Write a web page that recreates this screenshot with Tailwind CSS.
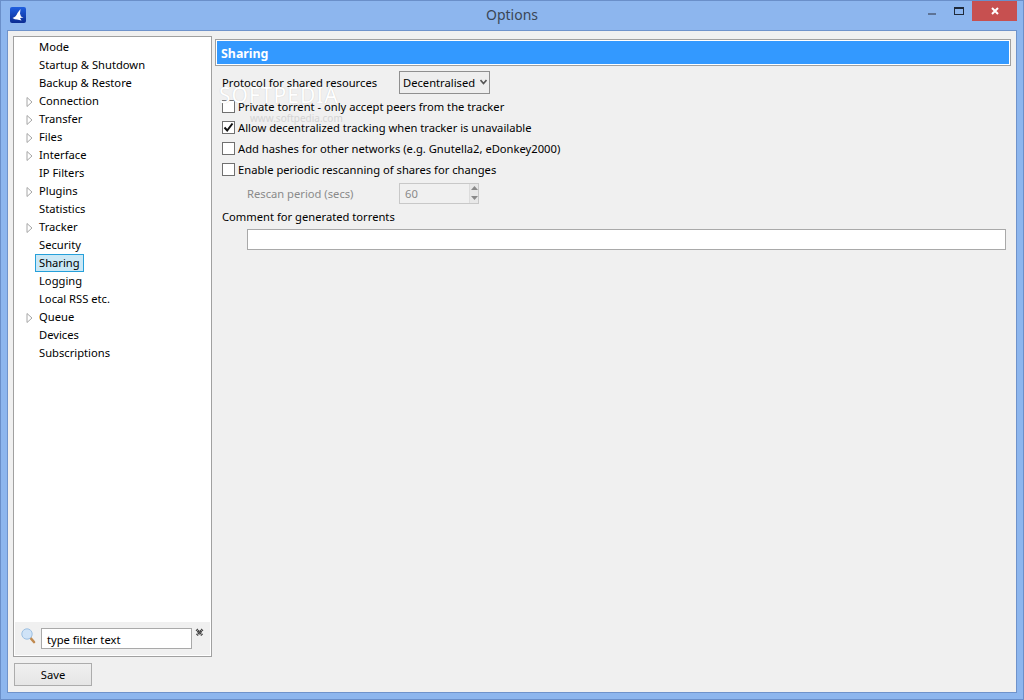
<!DOCTYPE html>
<html lang="en">

<head>
    <meta charset="UTF-8">
    <title>Options</title>
    <script src="https://cdn.jsdelivr.net/npm/@tailwindcss/browser@4"></script>
</head>

<body class="m-0">
    <div class="relative flex flex-col w-[1024px] h-[700px] overflow-hidden bg-[#8db6ee] border border-[#6a8fc9] font-['Noto_Sans','DejaVu_Sans',sans-serif] text-[11.2px] leading-[18px] text-black">

        <!-- title bar -->
        <div class="relative flex items-center justify-center h-[29px] shrink-0">
            <svg class="absolute left-[9px] top-[6px] w-4 h-4" viewBox="0 0 16 16">
                <defs>
                    <linearGradient id="logo" x1="0" y1="0" x2="0" y2="1">
                        <stop offset="0" stop-color="#1f5fe0" />
                        <stop offset="1" stop-color="#0c2c92" />
                    </linearGradient>
                </defs>
                <rect width="16" height="16" rx="2" fill="url(#logo)" />
                <path d="M2.5 11 C5 10.5 6.5 8.5 7.5 6 L10.5 2 L10 6.5 L11 9.5 L13.5 10.5 L10 11 L11.5 13.5 L7 12.5 C5.5 12.5 4 12 2.5 11 Z" fill="#fff" />
            </svg>
            <span class="text-[14px] text-[#3a4656] -mt-[1px]">Options</span>
            <div class="absolute right-[6px] top-0 flex items-start">
                <div class="flex justify-center w-[27px] pt-[12px]"><div class="w-[8px] h-[2px] bg-[#5d7396]"></div></div>
                <div class="flex justify-center w-[27px] pt-[6px]"><div class="w-[10px] h-[8px] border border-[#1f2a3a] border-t-2"></div></div>
                <div class="flex items-center justify-center w-[45px] h-[20px] bg-[#c75050]">
                    <svg class="w-2 h-2" viewBox="0 0 8 8"><path d="M1 1 L7 7 M7 1 L1 7" stroke="#fff" stroke-width="2" /></svg>
                </div>
            </div>
        </div>

        <!-- client area -->
        <div class="flex flex-col flex-1 mx-[6px] mb-[6px] border border-[#6f93cb] bg-[#f0f0f0] p-[5px]">
            <div class="flex flex-1 gap-[3px] min-h-0">

                <!-- tree -->
                <div class="flex flex-col w-[199px] h-[621px] shrink-0 border border-[#a0a0a0] bg-white">
                    <ul class="flex-1 pt-[1px]">
                        <li class="h-[18px] pl-[25px]">Mode</li>
                        <li class="h-[18px] pl-[25px]">Startup &amp; Shutdown</li>
                        <li class="h-[18px] pl-[25px]">Backup &amp; Restore</li>
                        <li class="relative h-[18px] pl-[25px]"><svg class="absolute left-[12px] top-[5px] w-[7px] h-[10px]" viewBox="0 0 7 10"><path d="M1 .5 L6 5 L1 9.5 Z" fill="#fff" stroke="#a6a6a6" /></svg>Connection</li>
                        <li class="relative h-[18px] pl-[25px]"><svg class="absolute left-[12px] top-[5px] w-[7px] h-[10px]" viewBox="0 0 7 10"><path d="M1 .5 L6 5 L1 9.5 Z" fill="#fff" stroke="#a6a6a6" /></svg>Transfer</li>
                        <li class="relative h-[18px] pl-[25px]"><svg class="absolute left-[12px] top-[5px] w-[7px] h-[10px]" viewBox="0 0 7 10"><path d="M1 .5 L6 5 L1 9.5 Z" fill="#fff" stroke="#a6a6a6" /></svg>Files</li>
                        <li class="relative h-[18px] pl-[25px]"><svg class="absolute left-[12px] top-[5px] w-[7px] h-[10px]" viewBox="0 0 7 10"><path d="M1 .5 L6 5 L1 9.5 Z" fill="#fff" stroke="#a6a6a6" /></svg>Interface</li>
                        <li class="h-[18px] pl-[25px]">IP Filters</li>
                        <li class="relative h-[18px] pl-[25px]"><svg class="absolute left-[12px] top-[5px] w-[7px] h-[10px]" viewBox="0 0 7 10"><path d="M1 .5 L6 5 L1 9.5 Z" fill="#fff" stroke="#a6a6a6" /></svg>Plugins</li>
                        <li class="h-[18px] pl-[25px]">Statistics</li>
                        <li class="relative h-[18px] pl-[25px]"><svg class="absolute left-[12px] top-[5px] w-[7px] h-[10px]" viewBox="0 0 7 10"><path d="M1 .5 L6 5 L1 9.5 Z" fill="#fff" stroke="#a6a6a6" /></svg>Tracker</li>
                        <li class="h-[18px] pl-[25px]">Security</li>
                        <li class="h-[18px] pl-[21px]"><span class="inline-block h-[18px] px-[3px] border border-[#26a0da] bg-[#cbe8f6] leading-[16px]">Sharing</span></li>
                        <li class="h-[18px] pl-[25px]">Logging</li>
                        <li class="h-[18px] pl-[25px]">Local RSS etc.</li>
                        <li class="relative h-[18px] pl-[25px]"><svg class="absolute left-[12px] top-[5px] w-[7px] h-[10px]" viewBox="0 0 7 10"><path d="M1 .5 L6 5 L1 9.5 Z" fill="#fff" stroke="#a6a6a6" /></svg>Queue</li>
                        <li class="h-[18px] pl-[25px]">Devices</li>
                        <li class="h-[18px] pl-[25px]">Subscriptions</li>
                    </ul>
                    <!-- filter box -->
                    <div class="relative flex items-start h-[33px] mx-[1px] mb-[1px] bg-[#f0f0f0] pl-[6px] pt-[6px]">
                        <svg class="w-[15px] h-[17px] mr-[5px]" viewBox="0 0 15 17">
                            <path d="M9.5 10 L13 14" stroke="#c08a50" stroke-width="2.6" stroke-linecap="round" />
                            <circle cx="6" cy="6" r="5.2" fill="#cfe3f7" stroke="#9dc0e2" />
                        </svg>
                        <div class="w-[151px] h-[21px] pl-[5px] border border-[#a9a9a9] bg-white leading-[21px]">type filter text</div>
                        <svg class="absolute left-[180px] top-[6px] w-[9px] h-[9px]" viewBox="0 0 9 9"><path d="M1.5 1.5 L7.5 7.5 M7.5 1.5 L1.5 7.5" stroke="#444" stroke-width="2.6" stroke-dasharray="1.2 .5" /></svg>
                    </div>
                </div>

                <!-- sharing panel -->
                <div class="relative flex-1 pt-[3px] min-w-0">
                    <div class="h-[27px] w-[796px] border border-[#a0a0a0] bg-white p-[1px]">
                        <div class="h-full bg-[#3399ff] pl-[4px] text-white font-bold text-[12.4px] leading-[25px]">Sharing</div>
                    </div>
                    <div class="pl-[7px] pt-[5px]">
                        <div class="flex items-center h-[23px]">
                            <span class="w-[177px]">Protocol for shared resources</span>
                            <div class="relative w-[91px] h-[23px] pl-[3px] border border-[#8f8f8f] bg-[#eeeeee] leading-[21px]">Decentralised
                                <svg class="absolute right-[2px] top-[7px] w-[7px] h-[6px]" viewBox="0 0 7 6"><path d="M.5 1 L3.5 4.5 L6.5 1" fill="none" stroke="#555" stroke-width="1.6" /></svg>
                            </div>
                        </div>
                        <div class="flex items-center h-[21px] mt-[2px]">
                            <span class="w-[13px] h-[13px] mr-[3px] border border-[#707070] bg-white"></span>Private torrent - only accept peers from the tracker
                        </div>
                        <div class="flex items-center h-[21px]">
                            <span class="flex w-[13px] h-[13px] mr-[3px] border border-[#707070] bg-white">
                                <svg class="w-[11px] h-[11px]" viewBox="0 0 11 11"><path d="M1.5 5.5 L4.2 8.5 L9.5 1.5" fill="none" stroke="#111" stroke-width="2" /></svg>
                            </span>Allow decentralized tracking when tracker is unavailable
                        </div>
                        <div class="flex items-center h-[21px]">
                            <span class="w-[13px] h-[13px] mr-[3px] border border-[#707070] bg-white"></span>Add hashes for other networks (e.g. Gnutella2, eDonkey2000)
                        </div>
                        <div class="flex items-center h-[21px]">
                            <span class="w-[13px] h-[13px] mr-[3px] border border-[#707070] bg-white"></span>Enable periodic rescanning of shares for changes
                        </div>
                        <div class="flex items-center h-[24px] mt-[1px] pl-[25px] text-[#8a8a8a]">
                            <span class="w-[152px] pt-[1px]">Rescan period (secs)</span>
                            <div class="relative w-[80px] h-[21px] pl-[5px] border border-[#c8c8c8] bg-[#f0f0f0] leading-[20px]">60
                                <div class="absolute right-0 top-0 flex flex-col items-center justify-around w-[9px] h-full border-l border-[#dcdcdc] bg-[#e8e8e8]">
                                    <svg class="w-[7px] h-[4px]" viewBox="0 0 7 4"><path d="M3.5 0 L7 4 L0 4 Z" fill="#8a8a8a" /></svg>
                                    <svg class="w-[7px] h-[4px]" viewBox="0 0 7 4"><path d="M3.5 4 L7 0 L0 0 Z" fill="#8a8a8a" /></svg>
                                </div>
                            </div>
                        </div>
                        <div class="h-[18px] mt-[3px] leading-[18px]">Comment for generated torrents</div>
                        <div class="h-[21px] w-[759px] ml-[25px] mt-[3px] border border-[#a9a9a9] bg-white"></div>
                    </div>
                    <!-- watermark -->
                    <div class="absolute left-[4px] top-[45px] text-[21px] leading-[28px] tracking-[1px] text-white [text-shadow:0_0_1px_#c4c4c4] pointer-events-none">SOFTPEDIA</div>
                    <div class="absolute left-[35px] top-[76px] text-[10px] leading-[12px] text-[#d4d4d4] pointer-events-none">www.softpedia.com</div>
                </div>
            </div>

            <!-- save -->
            <div class="mt-[4px] ml-[1px] mb-[1px] flex items-center justify-center w-[78px] h-[23px] border border-[#acacac] bg-gradient-to-b from-[#f0f0f0] to-[#e5e5e5]">Save</div>
        </div>
    </div>
</body>

</html>
